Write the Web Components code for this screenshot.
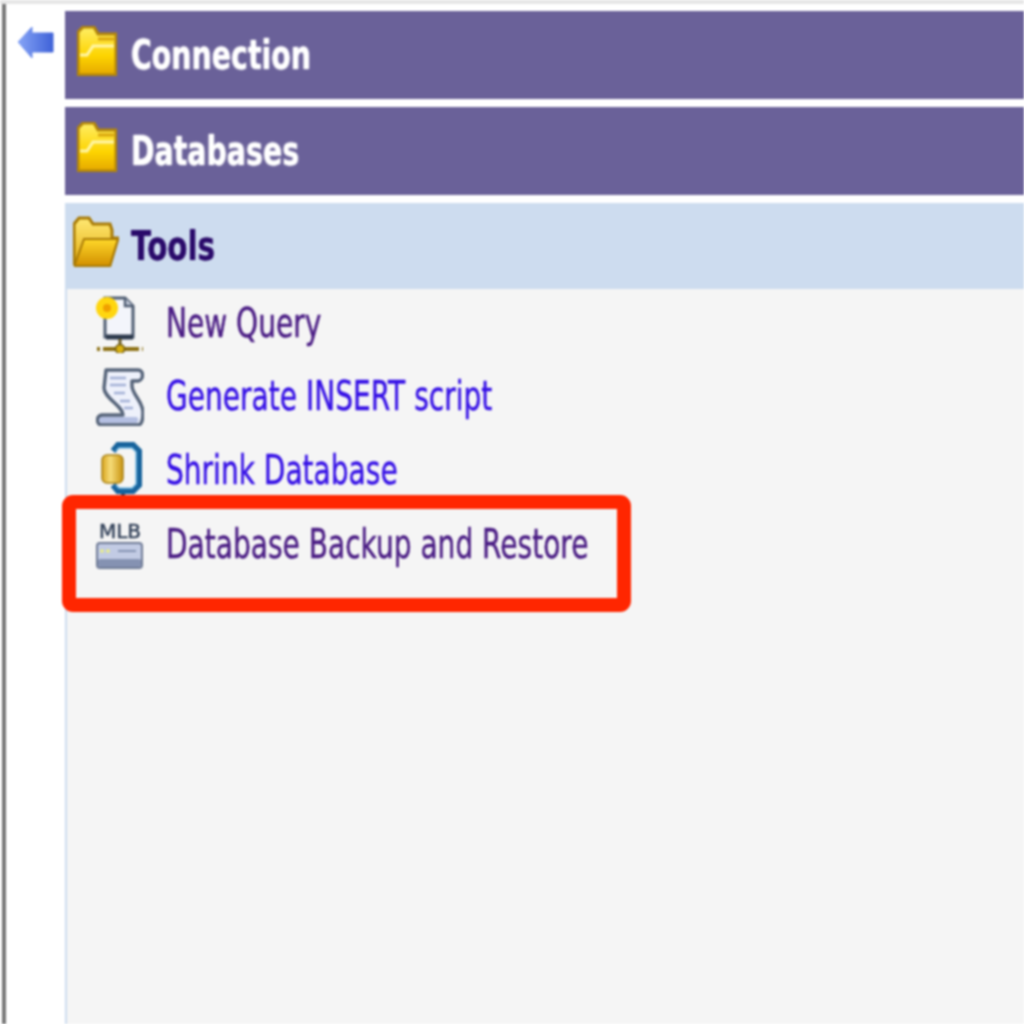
<!DOCTYPE html>
<html>
<head>
<meta charset="utf-8">
<title>Tools</title>
<style>
  html, body { margin: 0; height: 100%; background: #fff; overflow: hidden; }
  body { font-family: "DejaVu Sans", sans-serif; }
</style>
</head>
<body>
<svg width="0" height="0" style="position:absolute">
  <defs>
    <linearGradient id="gold" x1="0" y1="0" x2="1" y2="0">
      <stop offset="0" stop-color="#d9a520"/>
      <stop offset=".4" stop-color="#f6dc78"/>
      <stop offset="1" stop-color="#c99412"/>
    </linearGradient>
  </defs>
</svg>
<nav-shell>
  <back-arrow slot="rail"></back-arrow>
  <nav-header>Connection</nav-header>
  <nav-header>Databases</nav-header>
  <nav-header open>Tools</nav-header>
  <tool-list>
    <tool-item>
      <svg slot="icon" viewBox="0 0 48 60" width="48" height="60">
        <path d="M9 5h20l8 8v31H9z" fill="#f3f5fb" stroke="#4f5d72" stroke-width="3"/>
        <path d="M29 5v8h8" fill="#c5ccdb" stroke="#4f5d72" stroke-width="2.4"/>
        <path d="M10 44h27" stroke="#2c394c" stroke-width="5"/>
        <path d="M24 46v8" stroke="#6b5a20" stroke-width="3"/>
        <path d="M1 56h46" stroke="#8d7114" stroke-width="4" stroke-dasharray="3 3 36 3 3"/>
        <circle cx="24" cy="56" r="4.5" fill="#d8b010" stroke="#6e590f" stroke-width="1.5"/>
        <circle cx="11" cy="15" r="11" fill="#ffd60f"/>
        <circle cx="11" cy="15" r="4" fill="#f0a000"/>
      </svg>
      New Query
    </tool-item>
    <tool-item link>
      <svg slot="icon" viewBox="0 0 48 60" width="48" height="60">
        <path d="M10 4H42C48 4 48 14 42 15H36V20C36 28 47 36 47 46C47 52 46 59 42 59H6C0 59 0 50 6 49H27C27 40 8 32 8 22Z" fill="#eef1fb" stroke="#556379" stroke-width="3.4" stroke-linejoin="round"/>
        <path d="M14 12h16M14 19h16M18 27h11M24 35h10M28 42h9" stroke="#a3b1d6" stroke-width="2.4"/>
        <path d="M6 51H40C43 51 43 57 40 57H6C2 57 2 51 6 51Z" fill="#b4bfe2"/>
      </svg>
      Generate INSERT script
    </tool-item>
    <tool-item link>
      <svg slot="icon" viewBox="0 0 48 60" width="48" height="60">
        <path d="M17 11l5-6h15l6 6v34l-6 6H22l-5-6" fill="none" stroke="#17639c" stroke-width="6"/>
        <path d="M20 11l3-3h13l4 4v32l-4 4H23l-3-3" fill="none" stroke="#7fc0e6" stroke-width="1.5"/>
        <path d="M27 54v5" stroke="#173f62" stroke-width="4"/>
        <rect x="6" y="15" width="21" height="28" rx="5" fill="url(#gold)" stroke="#a98216" stroke-width="1.5"/>
      </svg>
      Shrink Database
    </tool-item>
    <tool-item marked>
      <svg slot="icon" viewBox="0 0 48 60" width="48" height="60">
        <text x="24" y="24" text-anchor="middle" font-family="DejaVu Sans" font-size="20" fill="#33425a" stroke="#33425a" stroke-width=".5">MLB</text>
        <rect x="1" y="29" width="45" height="25" rx="3" fill="#c2cbe4" stroke="#6f7b96" stroke-width="2"/>
        <rect x="2" y="45" width="43" height="8" rx="2" fill="#8592b2"/>
        <circle cx="6" cy="37" r="1.8" fill="#eef27a"/>
        <circle cx="12" cy="37" r="1.8" fill="#eef27a"/>
        <path d="M22 37h18" stroke="#8592b2" stroke-width="2"/>
      </svg>
      Database Backup and Restore
    </tool-item>
  </tool-list>
</nav-shell>

<script>
class NavShell extends HTMLElement {
  constructor() {
    super();
    this.attachShadow({ mode: "open" });
    this.shadowRoot.innerHTML = `
      <style>
        :host {
          display: grid;
          grid-template-columns: 65px 1fr;
          height: 1024px;
          box-sizing: border-box;
          border-top: 4px solid #e6e6e6;
          filter: blur(1px);
        }
        .rail { border-left: 4px solid #777; margin-left: 2px; padding-top: 23px; padding-left: 12px; }
        .main { display: flex; flex-direction: column; gap: 8px; padding-top: 7px; min-width: 0; }
      </style>
      <div class="rail"><slot name="rail"></slot></div>
      <div class="main"><slot></slot></div>
    `;
  }
}

class BackArrow extends HTMLElement {
  constructor() {
    super();
    this.attachShadow({ mode: "open" });
    this.shadowRoot.innerHTML = `
      <style>:host { display: block; width: 36px; height: 36px; }</style>
      <svg viewBox="0 0 36 36" width="36" height="36">
        <defs><linearGradient id="a" x1="0" x2="1"><stop offset="0" stop-color="#86a4f6"/><stop offset="1" stop-color="#3f62d8"/></linearGradient></defs>
        <path d="M0 15L14 0V6H35V25H14V31Z" fill="url(#a)" stroke="url(#a)" stroke-linejoin="round"/>
      </svg>
    `;
  }
}

class NavHeader extends HTMLElement {
  constructor() {
    super();
    this.attachShadow({ mode: "open" });
    const folder = this.hasAttribute("open")
      ? `<svg viewBox="0 0 46 52" width="46" height="52">
           <defs>
             <linearGradient id="b" x1="0" y1="0" x2="0" y2="1"><stop offset="0" stop-color="#ffe873"/><stop offset="1" stop-color="#e3ad10"/></linearGradient>
             <linearGradient id="f" x1="0" y1="0" x2="0" y2="1"><stop offset="0" stop-color="#ffd92a"/><stop offset="1" stop-color="#d28f00"/></linearGradient>
           </defs>
           <path d="M1 48V8l5-6h10l4 6h17l2 6v8h6l-8 27z" fill="url(#b)" stroke="#a87a06" stroke-width="3"/>
           <path d="M2 48l9-25h34l-8 27H2z" fill="url(#f)" stroke="#a87a06" stroke-width="2"/>
         </svg>`
      : `<svg viewBox="0 0 40 50" width="40" height="50">
           <defs><linearGradient id="g" x1="0" y1="0" x2="0" y2="1"><stop offset="0" stop-color="#ffee66"/><stop offset=".6" stop-color="#fdd400"/><stop offset="1" stop-color="#e5a800"/></linearGradient></defs>
           <path d="M1 49V6l5-5h11l4 7h18v41z" fill="url(#g)" stroke="#b3860a" stroke-width="3"/>
           <path d="M3 29h7l6-9h21" fill="none" stroke="#fff6a8" stroke-width="3"/>
           <path d="M21 13h16" stroke="#d9a60c" stroke-width="3"/>
         </svg>`;
    this.shadowRoot.innerHTML = `
      <style>
        :host {
          display: flex;
          align-items: center;
          height: 88px;
          background: #6a6199;
          color: #fff;
          font: bold 40px "DejaVu Sans", sans-serif;
          text-shadow: 0 0 2px #fff;
        }
        :host([open]) { background: #cddcef; color: #2a0a6a; height: 86px; margin-bottom: -8px; text-shadow: 0 0 1px #2a0a6a; }
        .ico { flex: none; width: 66px; padding-left: 12px; box-sizing: border-box; display: flex; margin-top: -8px; }
        :host([open]) .ico { padding-left: 8px; }
        span { display: inline-block; white-space: nowrap; transform: scaleX(.71); transform-origin: left center; }
        :host([open]) span { transform: scaleX(.735); }
      </style>
      <div class="ico">${folder}</div>
      <span><slot></slot></span>
    `;
  }
}

class ToolList extends HTMLElement {
  constructor() {
    super();
    this.attachShadow({ mode: "open" });
    this.shadowRoot.innerHTML = `
      <style>
        :host {
          display: flex;
          flex-direction: column;
          flex: 1;
          background: #f5f5f5;
          border-left: 2px solid #cddcef;
        }
      </style>
      <slot></slot>
    `;
  }
}

class ToolItem extends HTMLElement {
  constructor() {
    super();
    this.attachShadow({ mode: "open" });
    this.shadowRoot.innerHTML = `
      <style>
        :host {
          display: flex;
          align-items: center;
          box-sizing: border-box;
          height: 73.6px;
          padding: 0 0 6px 29px;
          position: relative;
          color: #4a1c84;
          font: 41px "DejaVu Sans", sans-serif;
          -webkit-text-stroke: .5px currentColor;
        }
        :host([link]) { color: #3510e6; }
        .ico { flex: none; width: 70px; height: 60px; }
        span { display: inline-block; white-space: nowrap; transform: scaleX(.684); transform-origin: left center; }
        .mark {
          display: none;
          position: absolute;
          left: -5px;
          top: -15px;
          width: 569px;
          height: 117px;
          box-sizing: border-box;
          border: 14px solid #ff2600;
          border-radius: 11px;
        }
        :host([marked]) .mark { display: block; }
      </style>
      <div class="ico"><slot name="icon"></slot></div>
      <span><slot></slot></span>
      <div class="mark"></div>
    `;
  }
}

customElements.define("nav-shell", NavShell);
customElements.define("back-arrow", BackArrow);
customElements.define("nav-header", NavHeader);
customElements.define("tool-list", ToolList);
customElements.define("tool-item", ToolItem);
</script>
</body>
</html>
